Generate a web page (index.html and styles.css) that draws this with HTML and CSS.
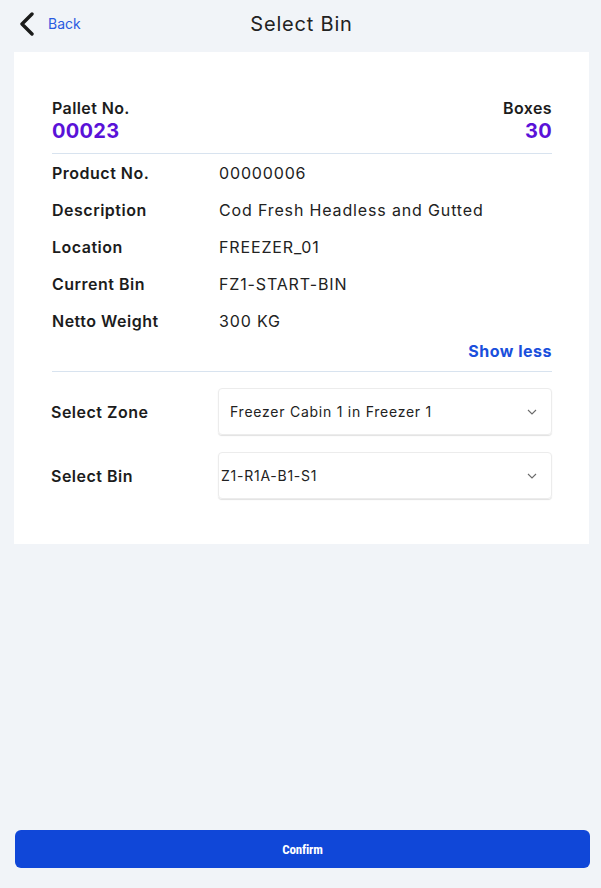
FILE: index.html
```html
<!DOCTYPE html>
<html>
<head>
<meta charset="utf-8">
<link rel="stylesheet" href="styles.css">
</head>
<body>
<div class="page">
  <header class="topbar">
    <a class="back">
      <svg class="chev" width="16" height="24" viewBox="0 0 16 24"><path d="M13 2 L3 12 L13 22" fill="none" stroke="#1b1b1b" stroke-width="3.4" stroke-linecap="round" stroke-linejoin="round"/></svg>
      <span>Back</span>
    </a>
    <h1 class="title">Select Bin</h1>
  </header>
  <section class="card">
    <div class="pallet">
      <div class="pcol">
        <div class="plabel">Pallet No.</div>
        <div class="pvalue">00023</div>
      </div>
      <div class="pcol right">
        <div class="plabel">Boxes</div>
        <div class="pvalue">30</div>
      </div>
    </div>
    <div class="details">
      <div class="row"><div class="lab">Product No.</div><div class="val">00000006</div></div>
      <div class="row"><div class="lab">Description</div><div class="val">Cod Fresh Headless and Gutted</div></div>
      <div class="row"><div class="lab">Location</div><div class="val">FREEZER_01</div></div>
      <div class="row"><div class="lab">Current Bin</div><div class="val">FZ1-START-BIN</div></div>
      <div class="row"><div class="lab">Netto Weight</div><div class="val">300 KG</div></div>
    </div>
    <div class="showless">Show less</div>
    <div class="selects">
      <div class="srow">
        <div class="slab">Select Zone</div>
        <div class="sbox zone"><span>Freezer Cabin 1 in Freezer 1</span>
          <svg width="10" height="6" viewBox="0 0 10 6"><path d="M1 1 L5 5 L9 1" fill="none" stroke="#6b6b6b" stroke-width="1.1"/></svg>
        </div>
      </div>
      <div class="srow">
        <div class="slab">Select Bin</div>
        <div class="sbox bin"><span>Z1-R1A-B1-S1</span>
          <svg width="10" height="6" viewBox="0 0 10 6"><path d="M1 1 L5 5 L9 1" fill="none" stroke="#6b6b6b" stroke-width="1.1"/></svg>
        </div>
      </div>
    </div>
  </section>
  <div class="spacer"></div>
  <button class="confirm">Confirm</button>
</div>
</body>
</html>
```
FILE: styles.css
```css
html, body {
  margin: 0;
  padding: 0;
  background: #f1f4f8;
}
body {
  font-family: Inter, "Noto Sans", sans-serif;
  color: #1c1c1c;
}
.page {
  width: 601px;
  height: 888px;
  display: flex;
  flex-direction: column;
  box-sizing: border-box;
  padding: 0 12px 20px 14px;
}
.topbar {
  height: 52px;
  position: relative;
  display: flex;
  align-items: center;
}
.back {
  display: flex;
  align-items: center;
  gap: 13px;
  padding-left: 5px;
  color: #2a5be0;
  font-size: 14px;
  margin-top: -5px;
}
.title {
  position: absolute;
  left: 0;
  right: 0;
  top: 12px;
  margin: 0;
  text-align: center;
  font-size: 20px;
  font-weight: 400;
  letter-spacing: 0.8px;
  color: #222;
  pointer-events: none;
}
.card {
  background: #fff;
  padding: 46px 37px 45px 38px;
  display: flex;
  flex-direction: column;
}
.pallet {
  display: flex;
  justify-content: space-between;
  padding-bottom: 9px;
  border-bottom: 1px solid #d8e3ef;
}
.pcol.right { text-align: right; }
.plabel {
  font-size: 16px;
  font-weight: 600;
  line-height: 20px;
  letter-spacing: 0.4px;
  color: #1c1c1c;
}
.pvalue {
  font-size: 20px;
  font-weight: 700;
  line-height: 26px;
  letter-spacing: 0.3px;
  color: #5a12d8;
}
.details {
  padding-top: 0;
}
.row {
  display: flex;
  height: 37px;
  align-items: center;
  font-size: 16px;
}
.lab {
  width: 167px;
  font-weight: 600;
  letter-spacing: 0.5px;
}
.val {
  font-weight: 400;
  color: #222;
  letter-spacing: 0.85px;
}
.showless {
  text-align: right;
  color: #1a4fdc;
  font-weight: 700;
  font-size: 16px;
  line-height: 20px;
  letter-spacing: 0.5px;
  margin-top: 2px;
  padding-bottom: 10px;
  border-bottom: 1px solid #d8e3ef;
}
.selects {
  padding-top: 16px;
  display: flex;
  flex-direction: column;
  gap: 17px;
}
.srow {
  display: flex;
  align-items: center;
}
.slab {
  width: 167px;
  margin-left: -1px;
  font-size: 16px;
  font-weight: 600;
  letter-spacing: 0.5px;
}
.sbox {
  flex: 1;
  height: 47px;
  box-sizing: border-box;
  border: 1px solid #ececec;
  border-radius: 4px;
  box-shadow: 0 1px 1px rgba(0,0,0,0.12);
  display: flex;
  align-items: center;
  justify-content: space-between;
  padding: 0 14px 0 11px;
  font-size: 14px;
  letter-spacing: 0.75px;
  color: #222;
}
.sbox.bin { padding-left: 2px; }
.spacer { flex: 1; }
.confirm {
  height: 38px;
  width: 575px;
  margin-left: 1px;
  border: none;
  border-radius: 6px;
  background: #1047d8;
  color: #fff;
  font-family: "Liberation Sans Narrow", "Roboto Condensed", Roboto, sans-serif;
  font-weight: 700;
  font-size: 13px;
  letter-spacing: -0.2px;
}
```
